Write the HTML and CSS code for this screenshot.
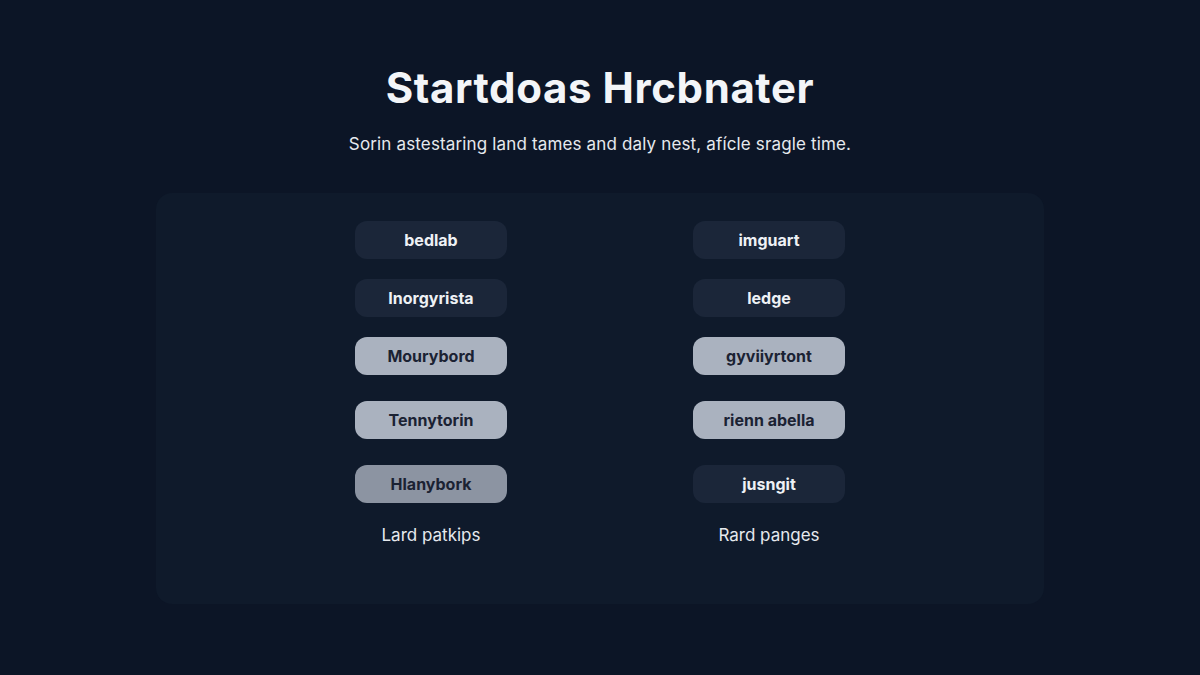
FILE: index.html
```html
<!DOCTYPE html>
<html lang="en">
<head>
    <meta charset="UTF-8">
    <meta name="viewport" content="width=device-width, initial-scale=1.0">
    <title>Startdoas Hrcbnater</title>
    <link rel="stylesheet" href="styles.css">
</head>
<body>
    <div class="page">
        <h1 class="title">Startdoas Hrcbnater</h1>
        <p class="lead">Sorin astestaring land tames and daly nest, afícle sragle time.</p>

        <div class="board">
            <div class="col">
                <button class="chip">bedlab</button>
                <button class="chip">Inorgyrista</button>
                <button class="chip light">Mourybord</button>
                <button class="chip light">Tennytorin</button>
                <button class="chip muted">Hlanybork</button>
                <p class="caption">Lard patkips</p>
            </div>
            <div class="col">
                <button class="chip">imguart</button>
                <button class="chip">ledge</button>
                <button class="chip light">gyviiyrtont</button>
                <button class="chip light">rienn abella</button>
                <button class="chip">jusngit</button>
                <p class="caption">Rard panges</p>
            </div>
        </div>
    </div>
</body>
</html>
```

FILE: styles.css
```css
*{
    margin: 0;
    padding: 0;
    box-sizing: border-box;
    font-family: 'Inter', 'Lato', sans-serif;
}
body{
    background: #0c1526;
    color: #f3f5f8;
}
.page{
    width: 1200px;
    height: 675px;
    display: flex;
    flex-direction: column;
    align-items: center;
    padding-top: 64px;
}
.title{
    font-size: 42px;
    font-weight: 700;
    letter-spacing: 0.6px;
    line-height: 48px;
}
.lead{
    margin-top: 20px;
    font-size: 17px;
    letter-spacing: 0.15px;
    line-height: 24px;
    color: #e6e9ee;
}
.board{
    margin-top: 37px;
    width: 888px;
    height: 411px;
    background: #0f1a2b;
    border-radius: 16px;
    display: flex;
    justify-content: center;
    gap: 186px;
    padding-top: 28px;
}
.col{
    width: 152px;
    display: flex;
    flex-direction: column;
    align-items: center;
}
.chip{
    width: 152px;
    height: 38px;
    border: none;
    border-radius: 12px;
    background: #1b2639;
    color: #eef1f5;
    font-family: 'Inter', sans-serif;
    font-size: 16px;
    font-weight: 700;
    margin-bottom: 20px;
}
.chip.light{
    background: #aab2bf;
    color: #1b2233;
    margin-bottom: 26px;
}
.chip.muted{
    background: #8c94a2;
    color: #1b2233;
}
.caption{
    margin-top: 2px;
    font-size: 17px;
    color: #e6e9ee;
}
```
